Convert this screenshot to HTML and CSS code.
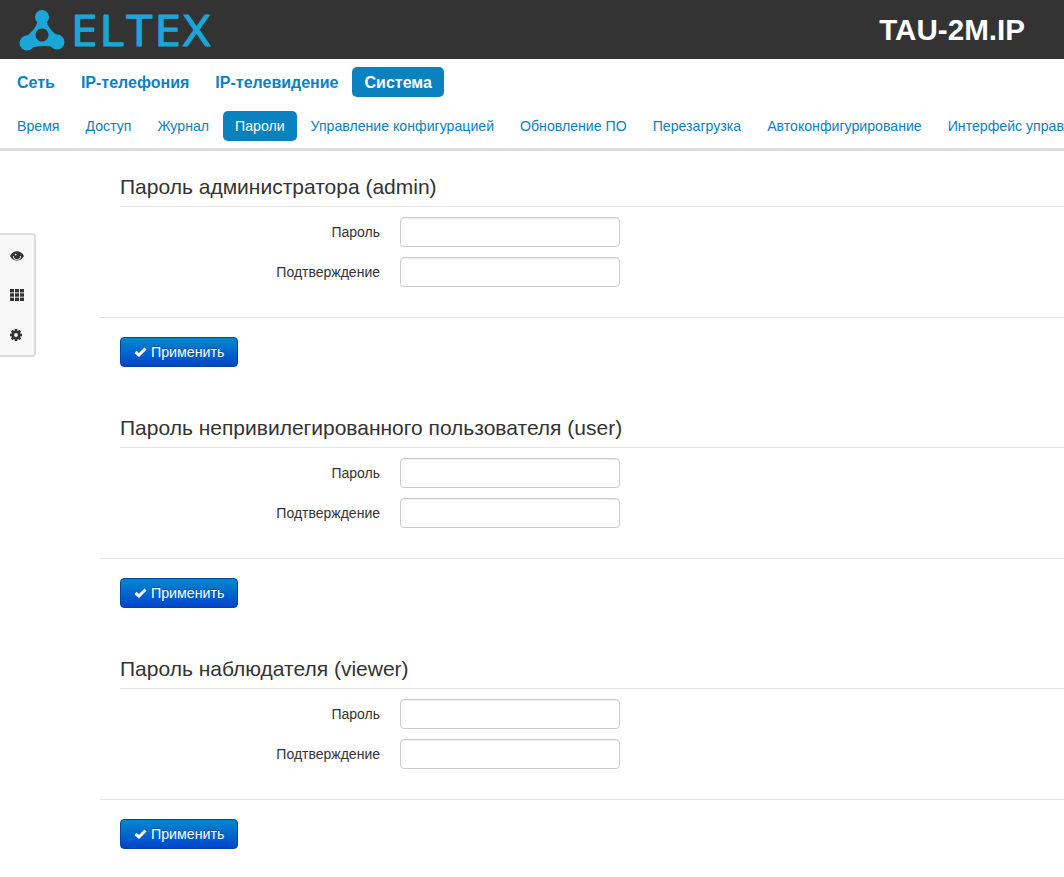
FILE: index.html
```html
<!DOCTYPE html>
<html lang="en">
<head>
    <meta charset="UTF-8">
    <title>TAU-2M.IP</title>
    <link rel="stylesheet" href="styles.css">
</head>
<body>
    <!-- Header -->
    <div class="header">
        <svg class="logo" width="240" height="59" viewBox="0 0 240 59">
            <path fill="#1ba6d9" fill-rule="evenodd" d="M38 20 Q36 30 24 38 L30 48 Q42 44.5 54 47 L61 38 Q48 30 46 20 Z M42 28.5 a6.5 6.5 0 1 0 .01 0 Z"/>
            <circle cx="42" cy="17" r="7" fill="#1ba6d9"/>
            <circle cx="27" cy="43" r="7.5" fill="#1ba6d9"/>
            <circle cx="57" cy="42" r="7.5" fill="#1ba6d9"/>
            <text class="logo-text" transform="translate(71 45.5) scale(1.1 1)">ELTEX</text>
        </svg>
        <div class="model">TAU-2M.IP</div>
    </div>

    <!-- Main menu -->
    <div class="nav nav-main">
        <a href="#">Сеть</a>
        <a href="#">IP-телефония</a>
        <a href="#">IP-телевидение</a>
        <a href="#" class="active">Система</a>
    </div>

    <!-- Sub menu -->
    <div class="nav nav-sub">
        <a href="#">Время</a>
        <a href="#">Доступ</a>
        <a href="#">Журнал</a>
        <a href="#" class="active">Пароли</a>
        <a href="#">Управление конфигурацией</a>
        <a href="#">Обновление ПО</a>
        <a href="#">Перезагрузка</a>
        <a href="#">Автоконфигурирование</a>
        <a href="#">Интерфейс управления</a>
    </div>

    <!-- Side toolbar -->
    <div class="sidebar">
        <svg width="14" height="10" viewBox="0 0 14 10">
            <path d="M0 5 C3 -1.2 11 -1.2 14 5 C11 11.2 3 11.2 0 5 Z" fill="#333"/>
            <path d="M3.2 5 A3.8 3.8 0 0 0 10.8 5" fill="none" stroke="#f8f8f8" stroke-width="0.9"/>
            <circle cx="5.6" cy="3.6" r="0.9" fill="#f8f8f8"/>
        </svg>
        <svg width="14" height="12" viewBox="0 0 14 12" fill="#333">
            <rect x="0" y="0" width="4" height="3.4"/><rect x="5" y="0" width="4" height="3.4"/><rect x="10" y="0" width="4" height="3.4"/>
            <rect x="0" y="4.3" width="4" height="3.4"/><rect x="5" y="4.3" width="4" height="3.4"/><rect x="10" y="4.3" width="4" height="3.4"/>
            <rect x="0" y="8.6" width="4" height="3.4"/><rect x="5" y="8.6" width="4" height="3.4"/><rect x="10" y="8.6" width="4" height="3.4"/>
        </svg>
        <svg class="cog" width="12" height="12" viewBox="0 0 12 12" fill="#333">
            <circle cx="6" cy="6" r="4.6"/>
            <rect x="4.7" y="0" width="2.6" height="12"/>
            <rect x="4.7" y="0" width="2.6" height="12" transform="rotate(45 6 6)"/>
            <rect x="4.7" y="0" width="2.6" height="12" transform="rotate(90 6 6)"/>
            <rect x="4.7" y="0" width="2.6" height="12" transform="rotate(135 6 6)"/>
            <circle cx="6" cy="6" r="1.9" fill="#f8f8f8"/>
        </svg>
    </div>

    <div class="content">
        <!-- Admin -->
        <div class="section">
            <h3>Пароль администратора (admin)</h3>
            <div class="form-row">
                <label>Пароль</label>
                <input type="password">
            </div>
            <div class="form-row">
                <label>Подтверждение</label>
                <input type="password">
            </div>
            <div class="actions">
                <button class="btn">
                    <svg width="13" height="10" viewBox="0 0 13 10"><path d="M1.5 5 L5 8 L11.5 1.5" fill="none" stroke="#fff" stroke-width="3"/></svg>
                    Применить
                </button>
            </div>
        </div>

        <!-- User -->
        <div class="section">
            <h3>Пароль непривилегированного пользователя (user)</h3>
            <div class="form-row">
                <label>Пароль</label>
                <input type="password">
            </div>
            <div class="form-row">
                <label>Подтверждение</label>
                <input type="password">
            </div>
            <div class="actions">
                <button class="btn">
                    <svg width="13" height="10" viewBox="0 0 13 10"><path d="M1.5 5 L5 8 L11.5 1.5" fill="none" stroke="#fff" stroke-width="3"/></svg>
                    Применить
                </button>
            </div>
        </div>

        <!-- Viewer -->
        <div class="section">
            <h3>Пароль наблюдателя (viewer)</h3>
            <div class="form-row">
                <label>Пароль</label>
                <input type="password">
            </div>
            <div class="form-row">
                <label>Подтверждение</label>
                <input type="password">
            </div>
            <div class="actions">
                <button class="btn">
                    <svg width="13" height="10" viewBox="0 0 13 10"><path d="M1.5 5 L5 8 L11.5 1.5" fill="none" stroke="#fff" stroke-width="3"/></svg>
                    Применить
                </button>
            </div>
        </div>
    </div>
</body>
</html>
```

FILE: styles.css
```css
/* General Styles */
html, body {
    height: 877px;
    overflow: hidden;
}

body {
    font-family: 'Liberation Sans', Arial, sans-serif;
    font-size: 14px;
    line-height: 20px;
    color: #333;
    margin: 0;
    background-color: #fff;
}

/* Header */
.header {
    height: 59px;
    background-color: #333;
    display: flex;
    justify-content: space-between;
    align-items: center;
    padding: 0 39px 0 0;
}

.logo-text {
    font-family: 'Open Sans', sans-serif;
    font-size: 43px;
    letter-spacing: 2px;
    fill: #1ba6d9;
    stroke: #1ba6d9;
    stroke-width: 1.2px;
    stroke-linejoin: round;
}

.model {
    color: #fff;
    font-size: 29.6px;
    font-weight: bold;
}

/* Menus */
.nav {
    display: flex;
    gap: 2px;
    padding-left: 5px;
    white-space: nowrap;
    overflow: hidden;
}

.nav a {
    color: #0a82bf;
    text-decoration: none;
    padding: 5px 12px;
    border-radius: 5px;
}

.nav a.active {
    color: #fff;
    background-color: #0a82bf;
}

.nav-main {
    padding-top: 8px;
    padding-bottom: 14px;
}

.nav-main a {
    font-size: 16px;
    font-weight: bold;
    padding: 6px 12px 4px;
}

.nav-main a.active {
    padding-left: 13px;
    margin-left: -1px;
}

.nav-sub {
    padding-bottom: 7px;
    border-bottom: 3px solid #ddd;
}

.nav-sub a {
    font-size: 14.14px;
}

/* Side toolbar */
.sidebar {
    position: absolute;
    left: 0;
    top: 233px;
    width: 36px;
    height: 124px;
    box-sizing: border-box;
    padding: 16px 0 14px;
    background-color: #f8f8f8;
    border: 2px solid #ddd;
    border-left: none;
    border-radius: 0 4px 4px 0;
    display: flex;
    flex-direction: column;
    justify-content: space-between;
    align-items: center;
}

.sidebar .cog {
    margin-right: 2px;
}

/* Password sections */
.content {
    padding: 21px 0 0 100px;
}

.section {
    margin-bottom: 46px;
}

.section h3 {
    font-size: 21px;
    font-weight: normal;
    line-height: 30px;
    color: #333;
    margin: 0 0 10px 20px;
    padding: 0 0 4px 0;
    border-bottom: 1px solid #e5e5e5;
}

.form-row {
    display: flex;
    align-items: center;
    gap: 20px;
    margin-bottom: 10px;
    padding-left: 20px;
}

.form-row label {
    width: 260px;
    text-align: right;
    font-size: 14px;
}

.form-row input {
    width: 220px;
    height: 30px;
    box-sizing: border-box;
    border: 1px solid #ccc;
    border-radius: 4px;
    box-shadow: inset 0 1px 1px rgba(0, 0, 0, 0.075);
    outline: none;
}

.actions {
    margin-top: 30px;
    padding: 19px 0 0 20px;
    border-top: 1px solid #e5e5e5;
}

.btn {
    display: flex;
    align-items: center;
    gap: 4px;
    width: 118px;
    height: 30px;
    padding: 0 0 0 13px;
    font-family: inherit;
    font-size: 14.2px;
    color: #fff;
    text-shadow: 0 -1px 0 rgba(0, 0, 0, 0.25);
    background: linear-gradient(to bottom, #0088cc, #0044cc);
    border: 1px solid #0044aa;
    border-radius: 4px;
    cursor: pointer;
}
```
